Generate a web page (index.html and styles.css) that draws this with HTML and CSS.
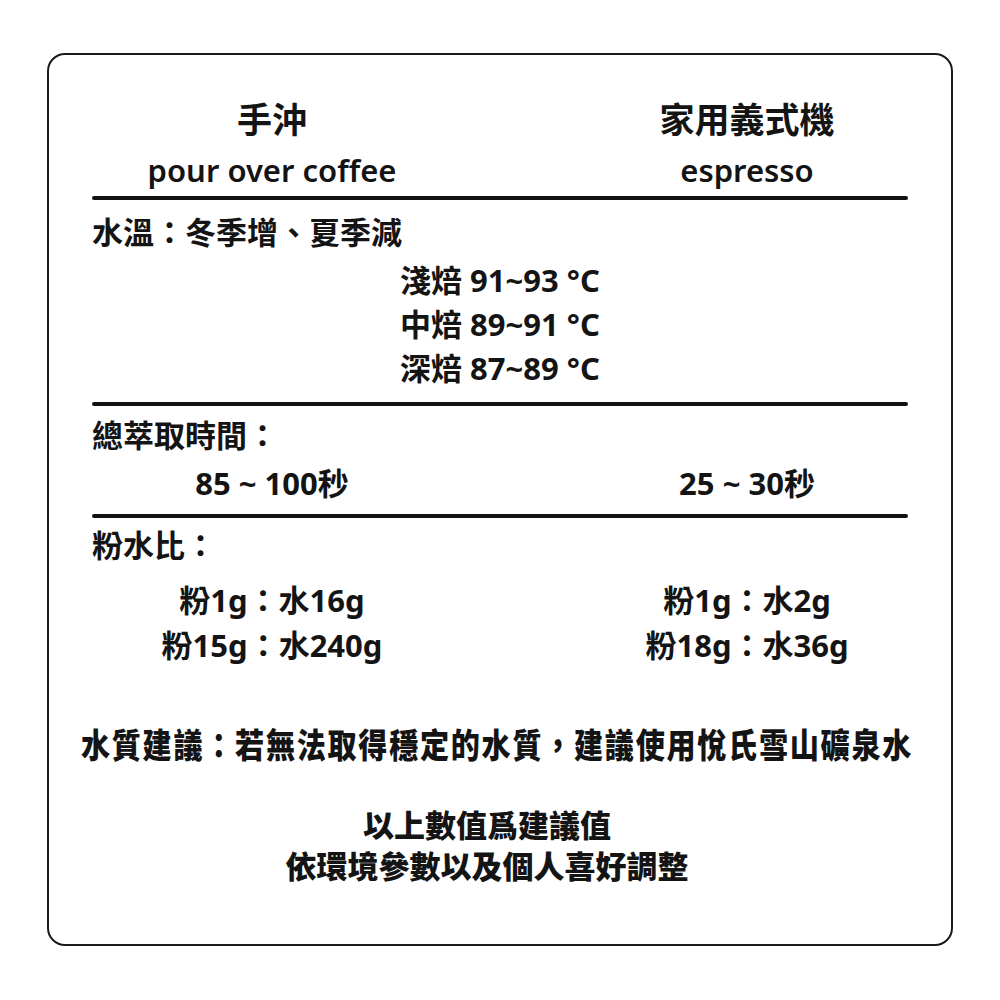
FILE: index.html
```html
<!DOCTYPE html>
<html lang="zh-Hant">
<head>
<meta charset="utf-8">
<title>咖啡沖煮參數</title>
<link rel="stylesheet" href="styles.css">
</head>
<body>
<div class="card">
  <div class="cols header">
    <div class="col">
      <div class="title">手沖</div>
      <div class="subtitle">pour over coffee</div>
    </div>
    <div class="col">
      <div class="title">家用義式機</div>
      <div class="subtitle">espresso</div>
    </div>
  </div>
  <div class="rule"></div>

  <div class="label first">水溫：冬季增、夏季減</div>
  <div class="temps">
    <div class="temp">淺焙 91~93 °C</div>
    <div class="temp">中焙 89~91 °C</div>
    <div class="temp">深焙 87~89 °C</div>
  </div>
  <div class="rule rule2"></div>

  <div class="label second">總萃取時間：</div>
  <div class="cols times">
    <div class="col value">85 ~ 100秒</div>
    <div class="col value">25 ~ 30秒</div>
  </div>
  <div class="rule rule3"></div>

  <div class="label third">粉水比：</div>
  <div class="cols ratios">
    <div class="col">
      <div class="ratio">粉1g：水16g</div>
      <div class="ratio">粉15g：水240g</div>
    </div>
    <div class="col">
      <div class="ratio">粉1g：水2g</div>
      <div class="ratio">粉18g：水36g</div>
    </div>
  </div>

  <div class="note"><span class="note-text">水質建議：若無法取得穩定的水質，建議使用悅氏雪山礦泉水</span></div>
  <div class="footer">
    <div class="foot">以上數值爲建議值</div>
    <div class="foot">依環境參數以及個人喜好調整</div>
  </div>
</div>
</body>
</html>
```
FILE: styles.css
```css
html, body {
  margin: 0;
  padding: 0;
  background: #ffffff;
}

body {
  font-family: "Noto Sans", "Noto Sans CJK TC", sans-serif;
  color: #141414;
  font-weight: 700;
}

.card {
  box-sizing: border-box;
  margin: 53px 0 0 47px;
  width: 906px;
  height: 893px;
  border: 2.5px solid #1a1a1a;
  border-radius: 18px;
  padding: 40px 43px 0 43px;
}

.cols {
  display: grid;
  grid-template-columns: 360px 322px;
  justify-content: space-between;
}

.col {
  text-align: center;
}

.title {
  font-size: 35px;
  line-height: 50px;
}

.subtitle {
  font-size: 31px;
  font-weight: 600;
  line-height: 50px;
}

.rule {
  height: 4px;
  background: #111;
  border-radius: 2px;
  margin-top: 1px;
}

.label {
  font-size: 31px;
  line-height: 44px;
}

.label.first { margin-top: 10px; }
.label.second { margin-top: 7px; }
.label.third { margin-top: 5px; }

.temps {
  margin-top: 4px;
  padding-left: 308px;
}

.temp {
  font-size: 31px;
  line-height: 44px;
}

.rule2 { margin-top: 12px; }
.rule3 { margin-top: 9px; }

.times {
  margin-top: 4px;
}

.value {
  font-size: 31px;
  line-height: 44px;
}

.ratios {
  margin-top: 11px;
}

.ratio {
  font-size: 31px;
  line-height: 45px;
}

.note {
  margin-top: 54px;
  display: flex;
  justify-content: center;
  font-family: "Noto Sans CJK TC", sans-serif;
  font-weight: 900;
  font-size: 34px;
  line-height: 44px;
  white-space: nowrap;
}

.note-text {
  flex: none;
  display: block;
  letter-spacing: 2px;
  transform: scaleX(0.856);
  margin-left: -6px;
}

.footer {
  margin-top: 37px;
  padding-right: 26px;
  text-align: center;
  font-family: "Noto Sans CJK TC", sans-serif;
  font-weight: 900;
}

.foot {
  font-size: 31px;
  line-height: 41px;
}
```
